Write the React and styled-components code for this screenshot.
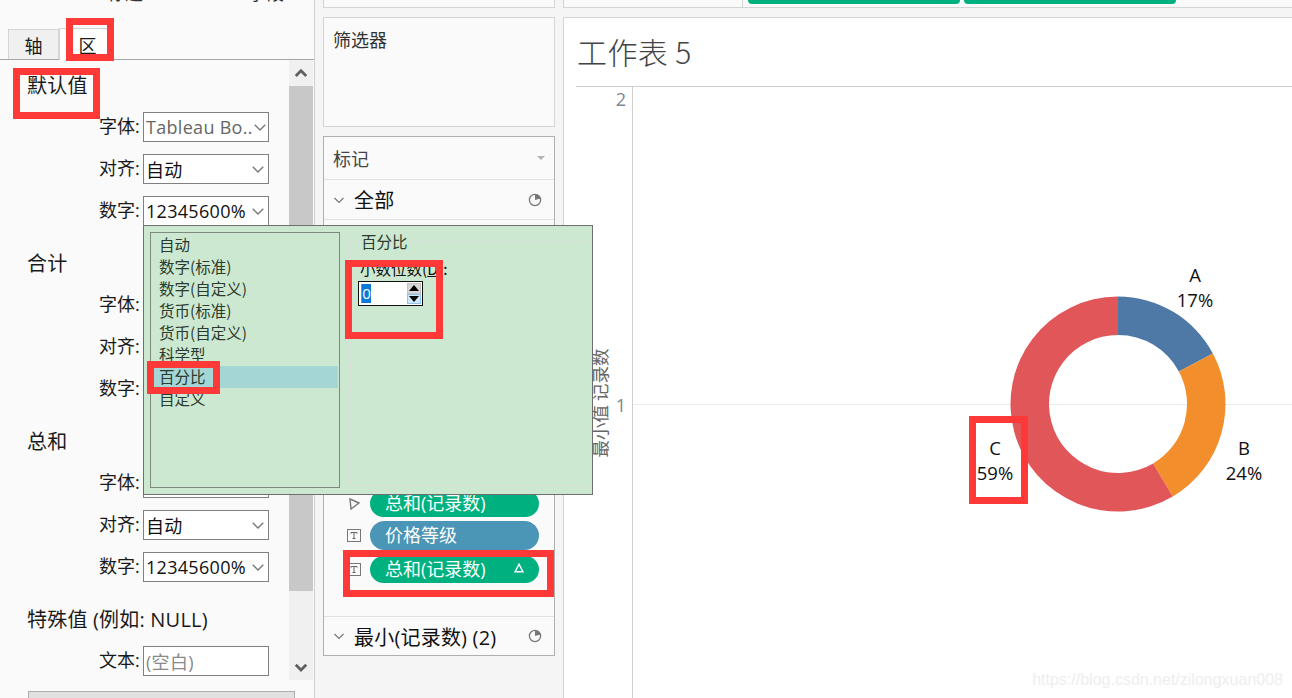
import React from "react";
import styled, { createGlobalStyle } from "styled-components";

const Global = createGlobalStyle`
  html, body { margin: 0; padding: 0; background: #f5f5f5; }
  * { box-sizing: border-box; }
  body { font-family: "Open Sans", "Noto Sans CJK SC", sans-serif; color: #1a1a1a; }
`;

const Page = styled.div`
  position: relative;
  display: flex;
  width: 1292px;
  height: 698px;
  overflow: hidden;
  background: #f5f5f5;
`;

/* ---------- left format pane ---------- */
const LeftPane = styled.aside`
  display: flex;
  flex-direction: column;
  flex: none;
  width: 315px;
  background: #fafafa;
  border-right: 1px solid #d0d0d0;
`;
const ClippedHead = styled.div`
  display: flex;
  flex: none;
  height: 5px;
  overflow: hidden;
  padding-left: 107px;
  gap: 105px;
  font-size: 18px;
  line-height: 26px;
  color: #333;
  span { display: block; margin-top: -20px; }
`;
const TabBar = styled.div`
  display: flex;
  flex: none;
  align-items: flex-end;
  height: 55px;
  padding-left: 8px;
  border-bottom: 1px solid #a6a6a6;
`;
const Tab = styled.div`
  width: 51px;
  height: ${p => (p.$active ? "32px" : "30px")};
  display: flex;
  align-items: center;
  justify-content: center;
  padding-left: ${p => (p.$active ? "6px" : "0")};
  font-size: 18px;
  background: ${p => (p.$active ? "#fff" : "#f0f0f0")};
  border: 1px solid #d4d4d4;
  border-bottom: none;
  margin-bottom: ${p => (p.$active ? "-1px" : "0")};
`;
const ScrollRegion = styled.div`
  display: flex;
  height: 620px;
  flex: none;
`;
const Form = styled.div`
  flex: 1;
  padding: 13px 0 0 27px;
  display: flex;
  flex-direction: column;
  gap: 25px;
`;
const Section = styled.section`
  display: flex;
  flex-direction: column;
  gap: 12px;
`;
const SectionTitle = styled.div`
  height: 26px;
  line-height: 26px;
  font-size: 20px;
  letter-spacing: 0.2px;
  margin-bottom: 1px;
  white-space: nowrap;
`;
const Field = styled.div`
  display: flex;
  align-items: center;
  height: 30px;
  padding-left: 72px;
  gap: 4px;
`;
const FieldLabel = styled.span`
  width: 40px;
  font-size: 18px;
  line-height: 28px;
  padding-bottom: 2px;
  white-space: nowrap;
  text-align: right;
`;
const SelectBox = styled.div`
  display: flex;
  align-items: center;
  justify-content: space-between;
  width: 126px;
  height: 30px;
  padding: 0 3px 0 2px;
  background: #fff;
  border: 1px solid #808080;
  font-size: 18px;
  letter-spacing: 0.3px;
  white-space: nowrap;
  overflow: hidden;
  color: ${p => p.$color || "#111"};
  svg { flex: none; }
`;
const ScrollBar = styled.div`
  display: flex;
  flex-direction: column;
  flex: none;
  width: 24px;
  margin-right: 1px;
  background: #f0f0f0;
`;
const ScrollBtn = styled.div`
  height: 26px;
  display: flex;
  align-items: center;
  justify-content: center;
  flex: none;
`;
const ScrollThumb = styled.div`
  height: 505px;
  flex: none;
  background: #c8c8c8;
`;
const ScrollGap = styled.div`flex: 1;`;
const PaneButton = styled.div`
  flex: none;
  width: 267px;
  height: 30px;
  margin: 11px 0 0 28px;
  background: #e1e1e1;
  border: 1px solid #adadad;
`;

/* ---------- middle shelves ---------- */
const MidCol = styled.div`
  display: flex;
  flex-direction: column;
  flex: none;
  width: 232px;
  margin-left: 8px;
  gap: 9px;
`;
const TopStub = styled.div`
  height: 8px;
  flex: none;
  background: #fafafa;
  border: 1px solid #d4d4d4;
  border-top: none;
`;
const FilterCard = styled.div`
  height: 110px;
  flex: none;
  padding: 9px 9px;
  background: #fafafa;
  border: 1px solid #d4d4d4;
  font-size: 18px;
  line-height: 26px;
  color: #333;
`;
const MarksCard = styled.div`
  height: 520px;
  flex: none;
  display: flex;
  flex-direction: column;
  background: #fafafa;
  border: 1px solid #b0b0b0;
`;
const MarksHead = styled.div`
  height: 43px;
  flex: none;
  display: flex;
  align-items: center;
  justify-content: space-between;
  padding: 0 9px;
  font-size: 18px;
  color: #444;
  border-bottom: 1px solid #e2e2e2;
`;
const CaretDown = styled.i`
  width: 0;
  height: 0;
  border-left: 4px solid transparent;
  border-right: 4px solid transparent;
  border-top: 4px solid #b4b4b4;
`;
const GroupRow = styled.div`
  height: ${p => p.$h}px;
  flex: none;
  display: flex;
  align-items: center;
  padding: 0 12px 0 9px;
  font-size: 20px;
  letter-spacing: 0.2px;
  color: #111;
  border-bottom: ${p => (p.$line ? "1px solid #e2e2e2" : "none")};
  border-top: ${p => (p.$top ? "1px solid #e2e2e2" : "none")};
  svg:first-child { margin-right: 9px; }
  span { flex: 1; white-space: nowrap; }
`;
const MarkList = styled.div`
  flex: 1;
  display: flex;
  flex-direction: column;
  justify-content: flex-end;
  padding-bottom: 33px;
`;
const MarkRow = styled.div`
  display: flex;
  align-items: center;
  height: ${p => p.$h}px;
  margin-top: ${p => p.$mt}px;
  padding-left: 23px;
  gap: 9px;
  svg { flex: none; }
`;
const Pill = styled.div`
  display: flex;
  align-items: center;
  justify-content: space-between;
  width: 169px;
  height: 100%;
  padding: 0 15px 3px 15px;
  border-radius: 15px;
  background: ${p => p.$bg};
  color: #fff;
  font-size: 18px;
  white-space: nowrap;
`;

/* ---------- worksheet ---------- */
const RightCol = styled.div`
  flex: 1;
  display: flex;
  flex-direction: column;
  margin-left: 8px;
  gap: 9px;
  min-width: 0;
`;
const ColumnsStub = styled.div`
  height: 8px;
  flex: none;
  display: flex;
  background: #fafafa;
  border-bottom: 1px solid #d4d4d4;
  border-left: 1px solid #d4d4d4;
`;
const StubLabel = styled.div`
  width: 179px;
  border-right: 1px solid #d4d4d4;
  flex: none;
`;
const StubPill = styled.div`
  width: 212px;
  height: 4px;
  margin-left: ${p => p.$ml}px;
  background: #00b180;
  border-radius: 0 0 10px 10px;
`;
const Sheet = styled.main`
  flex: 1;
  display: flex;
  flex-direction: column;
  min-height: 0;
  background: #fff;
  border-left: 1px solid #d4d4d4;
  border-top: 1px solid #d4d4d4;
`;
const SheetTitle = styled.h1`
  flex: none;
  height: 69px;
  margin: 0 0 0 12px;
  padding: 12px 0 0 1px;
  font-family: "Noto Sans CJK SC", "Open Sans", sans-serif;
  font-size: 30px;
  line-height: 42px;
  font-weight: 300;
  letter-spacing: 0.4px;
  color: #444;
  border-bottom: 1px solid #cfcfcf;
`;
const ChartArea = styled.div`
  flex: 1;
  display: flex;
  margin-left: 12px;
  min-height: 0;
`;
const AxisCol = styled.div`
  position: relative;
  flex: none;
  width: 57px;
  border-right: 1px solid #cfcfcf;
  color: #7a8794;
  font-size: 18px;
`;
const Tick = styled.span`
  position: absolute;
  right: 6px;
  top: ${p => p.$top}px;
  line-height: 24px;
`;
const AxisTitle = styled.span`
  position: absolute;
  left: 15px;
  top: 316px;
  font-family: "Noto Sans CJK SC", sans-serif;
  font-size: 17.5px;
  line-height: 17px;
  white-space: nowrap;
  color: #666;
  writing-mode: vertical-rl;
  text-orientation: sideways;
  transform: translateY(-50%) rotate(180deg);
`;
const Plot = styled.div`
  position: relative;
  flex: 1;
`;
const GridLine = styled.div`
  position: absolute;
  left: 0;
  right: 0;
  top: 317px;
  border-top: 1px solid #ececec;
`;
const Donut = styled.svg`
  position: absolute;
  left: 376px;
  top: 208px;
`;
const PieLabel = styled.div`
  position: absolute;
  left: ${p => p.$x}px;
  top: ${p => p.$y}px;
  width: 60px;
  text-align: center;
  transform: translateX(-50%);
  font-size: 18.5px;
  line-height: 25px;
  color: #111;
`;
const Watermark = styled.div`
  position: absolute;
  right: 9px;
  bottom: 7px;
  font-family: "Liberation Sans", sans-serif;
  font-size: 16px;
  line-height: 22px;
  color: #eeeeee;
  white-space: nowrap;
`;

/* ---------- number format popup ---------- */
const Popup = styled.div`
  position: absolute;
  left: 143px;
  top: 225px;
  width: 450px;
  height: 270px;
  display: flex;
  background: #cde8d0;
  border: 1px solid #6f6f6f;
  font-family: "Noto Sans CJK SC", sans-serif;
  font-size: 15.5px;
  color: #2b3b2f;
`;
const FormatList = styled.ul`
  flex: none;
  width: 190px;
  height: 256px;
  margin: 6px 0 0 6px;
  padding: 1px 1px 0 1px;
  list-style: none;
  border: 1px solid #7e8a80;
`;
const FormatItem = styled.li`
  height: 22px;
  line-height: 20px;
  padding-left: 7px;
  background: ${p => (p.$selected ? "#a5d6d6" : "transparent")};
  white-space: nowrap;
`;
const DetailBox = styled.div`
  position: relative;
  flex: none;
  width: 238px;
  height: 245px;
  margin: 15px 0 0 10px;
  padding: 15px 0 0 9px;
  border: 1px solid #d8dfd8;
`;
const Legend = styled.span`
  position: absolute;
  left: 8px;
  top: -11px;
  padding: 0 2px;
  line-height: 20px;
  background: #cde8d0;
`;
const DecimalLabel = styled.div`
  height: 22px;
  line-height: 22px;
  white-space: nowrap;
  color: #111;
  u { text-underline-offset: 1px; }
`;
const SpinBox = styled.div`
  display: flex;
  align-items: center;
  justify-content: space-between;
  width: 65px;
  height: 25px;
  margin: 2px 0 0 -2px;
  padding: 0 1px 0 2px;
  background: #fff;
  border: 1px solid #111;
`;
const SpinValue = styled.span`
  width: 10px;
  height: 19px;
  line-height: 19px;
  text-align: center;
  font-family: "Open Sans", sans-serif;
  font-size: 15px;
  color: #fff;
  background: #0a78d7;
  border-left: 1px solid #e07a20;
`;
const SpinArrows = styled.div`
  display: flex;
  flex-direction: column;
  width: 14px;
  height: 21px;
`;
const SpinArrow = styled.div`
  flex: 1;
  display: flex;
  align-items: center;
  justify-content: center;
  background: ${p => (p.$active ? "#cfe6fb" : "#d6d6d6")};
  border: 1px solid ${p => (p.$active ? "#8fc3f0" : "#c4c4c4")};
  i {
    width: 0;
    height: 0;
    border-left: 5px solid transparent;
    border-right: 5px solid transparent;
    ${p => (p.$down ? "border-top: 6px solid #000;" : "border-bottom: 6px solid #000;")}
  }
`;

/* ---------- red review marks ---------- */
const Mark = styled.div`
  position: absolute;
  left: ${p => p.$x}px;
  top: ${p => p.$y}px;
  width: ${p => p.$w}px;
  height: ${p => p.$h}px;
  border: 7px solid #ff3838;
  pointer-events: none;
`;

/* ---------- icons ---------- */
const Chevron = ({ size = 12, color = "#777", up = false, weight = 1.2 }) => (
  <svg width={size} height={size} viewBox="0 0 12 12">
    <path d={up ? "M1.5 8.5 6 4l4.5 4.5" : "M1.5 4 6 8.5 10.5 4"} fill="none" stroke={color} strokeWidth={weight} />
  </svg>
);
const PieIcon = () => (
  <svg width="14" height="14" viewBox="0 0 14 14">
    <circle cx="7" cy="7" r="5.6" fill="none" stroke="#777" strokeWidth="1.3" />
    <path d="M7 7V1.4A5.6 5.6 0 0 1 12.4 5.6Z" fill="#777" />
  </svg>
);
const TextIcon = () => (
  <svg width="14" height="13" viewBox="0 0 14 13">
    <rect x="0.5" y="0.5" width="13" height="12" fill="none" stroke="#777" />
    <path d="M4 3.5h6M7 3.5v6M5.5 9.5h3M4 3.5v1.2M10 3.5v1.2" fill="none" stroke="#666" />
  </svg>
);
const SizeIcon = () => (
  <svg width="14" height="14" viewBox="0 0 14 14">
    <path d="M3 2 12 6 4 12Z" fill="none" stroke="#777" strokeWidth="1.4" />
  </svg>
);
const DeltaIcon = () => (
  <svg width="10" height="10" viewBox="0 0 10 10">
    <path d="M5 1.2 9 8.8H1Z" fill="none" stroke="#fff" strokeWidth="1.4" />
  </svg>
);

const polar = (r, pct) => {
  const a = (pct / 100) * 2 * Math.PI;
  return [109 + r * Math.sin(a), 109 - r * Math.cos(a)];
};
const arc = (from, to) => {
  const [x1, y1] = polar(107.5, from);
  const [x2, y2] = polar(107.5, to);
  const [x3, y3] = polar(69, to);
  const [x4, y4] = polar(69, from);
  const large = to - from > 50 ? 1 : 0;
  return `M${x1} ${y1}A107.5 107.5 0 ${large} 1 ${x2} ${y2}L${x3} ${y3}A69 69 0 ${large} 0 ${x4} ${y4}Z`;
};

const FieldLine = ({ label, value, color }) => (
  <Field>
    <FieldLabel>{label}</FieldLabel>
    <SelectBox $color={color}>
      <span>{value}</span>
      <Chevron size={14} />
    </SelectBox>
  </Field>
);

const formats = ["自动", "数字(标准)", "数字(自定义)", "货币(标准)", "货币(自定义)", "科学型", "百分比", "自定义"];

export default function App() {
  return (
    <Page>
      <Global />
      <LeftPane>
        <ClippedHead><span>标题</span><span>字段</span></ClippedHead>
        <TabBar>
          <Tab>轴</Tab>
          <Tab $active>区</Tab>
        </TabBar>
        <ScrollRegion>
          <Form>
            <Section>
              <SectionTitle>默认值</SectionTitle>
              <FieldLine label="字体:" value="Tableau Bo.." color="#666" />
              <FieldLine label="对齐:" value="自动" />
              <FieldLine label="数字:" value="12345600%" />
            </Section>
            <Section>
              <SectionTitle>合计</SectionTitle>
              <FieldLine label="字体:" value="" />
              <FieldLine label="对齐:" value="" />
              <FieldLine label="数字:" value="" />
            </Section>
            <Section>
              <SectionTitle>总和</SectionTitle>
              <FieldLine label="字体:" value="" />
              <FieldLine label="对齐:" value="自动" />
              <FieldLine label="数字:" value="12345600%" />
            </Section>
            <Section>
              <SectionTitle>特殊值 (例如: NULL)</SectionTitle>
              <Field>
                <FieldLabel>文本:</FieldLabel>
                <SelectBox $color="#8a8a8a">(空白)</SelectBox>
              </Field>
            </Section>
          </Form>
          <ScrollBar>
            <ScrollBtn><Chevron size={14} color="#606060" up weight={2.4} /></ScrollBtn>
            <ScrollThumb />
            <ScrollGap />
            <ScrollBtn><Chevron size={14} color="#606060" weight={2.4} /></ScrollBtn>
          </ScrollBar>
        </ScrollRegion>
        <PaneButton />
      </LeftPane>

      <MidCol>
        <TopStub />
        <FilterCard>筛选器</FilterCard>
        <MarksCard>
          <MarksHead>标记<CaretDown /></MarksHead>
          <GroupRow $h={40} $line>
            <Chevron size={12} />
            <span>全部</span>
            <PieIcon />
          </GroupRow>
          <MarkList>
            <MarkRow $h={27} $mt={0}>
              <SizeIcon />
              <Pill $bg="#00b180">总和(记录数)</Pill>
            </MarkRow>
            <MarkRow $h={29} $mt={4}>
              <TextIcon />
              <Pill $bg="#4b95b6">价格等级</Pill>
            </MarkRow>
            <MarkRow $h={27} $mt={6}>
              <TextIcon />
              <Pill $bg="#00b180">总和(记录数)<DeltaIcon /></Pill>
            </MarkRow>
          </MarkList>
          <GroupRow $h={39} $top>
            <Chevron size={12} />
            <span>最小(记录数) (2)</span>
            <PieIcon />
          </GroupRow>
        </MarksCard>
      </MidCol>

      <RightCol>
        <ColumnsStub>
          <StubLabel />
          <StubPill $ml={5} />
          <StubPill $ml={4} />
        </ColumnsStub>
        <Sheet>
          <SheetTitle>工作表 5</SheetTitle>
          <ChartArea>
            <AxisCol>
              <Tick $top={0}>2</Tick>
              <AxisTitle>最小值 记录数</AxisTitle>
              <Tick $top={306}>1</Tick>
            </AxisCol>
            <Plot>
              <GridLine />
              <Donut width="218" height="218" viewBox="0 0 218 218">
                <path d={arc(0, 17.2)} fill="#4e79a7" />
                <path d={arc(17.2, 41.5)} fill="#f28e2b" />
                <path d={arc(41.5, 100)} fill="#e15759" />
              </Donut>
              <PieLabel $x={562} $y={175}>A<br />17%</PieLabel>
              <PieLabel $x={611} $y={348}>B<br />24%</PieLabel>
              <PieLabel $x={362} $y={348}>C<br />59%</PieLabel>
              <Watermark>https://blog.csdn.net/zilongxuan008</Watermark>
            </Plot>
          </ChartArea>
        </Sheet>
      </RightCol>

      <Popup>
        <FormatList>
          {formats.map(f => (
            <FormatItem key={f} $selected={f === "百分比"}>{f}</FormatItem>
          ))}
        </FormatList>
        <DetailBox>
          <Legend>百分比</Legend>
          <DecimalLabel>小数位数(<u>D</u>):</DecimalLabel>
          <SpinBox>
            <SpinValue>0</SpinValue>
            <SpinArrows>
              <SpinArrow><i /></SpinArrow>
              <SpinArrow $down $active><i /></SpinArrow>
            </SpinArrows>
          </SpinBox>
        </DetailBox>
      </Popup>

      <Mark $x={66} $y={18} $w={48} $h={43} />
      <Mark $x={13} $y={68} $w={87} $h={51} />
      <Mark $x={345} $y={260} $w={98} $h={79} />
      <Mark $x={147} $y={361} $w={73} $h={33} />
      <Mark $x={343} $y={550} $w={211} $h={47} />
      <Mark $x={969} $y={416} $w={59} $h={88} />
    </Page>
  );
}
